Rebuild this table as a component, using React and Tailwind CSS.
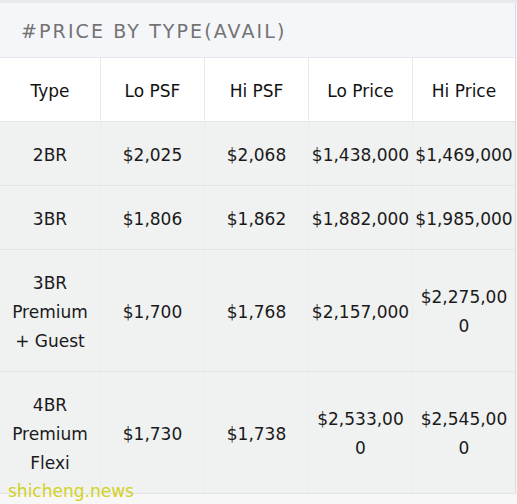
import React from "react";

const cols = ["w-[101px]", "w-[104px]", "w-[104px]", "w-[104px]", "w-[102px]"];

const rows = [
  { h: "h-[64px]", cells: ["2BR", "$2,025", "$2,068", "$1,438,000", "$1,469,000"] },
  { h: "h-[64px]", cells: ["3BR", "$1,806", "$1,862", "$1,882,000", "$1,985,000"] },
  {
    h: "h-[122px]",
    cells: [["3BR", "Premium", "+ Guest"], "$1,700", "$1,768", "$2,157,000", ["$2,275,00", "0"]],
  },
  {
    h: "h-[122px]",
    cells: [["4BR", "Premium", "Flexi"], "$1,730", "$1,738", ["$2,533,00", "0"], ["$2,545,00", "0"]],
  },
];

const Cell = ({ value, width, last, border }) => {
  const lines = Array.isArray(value) ? value : [value];
  return (
    <div
      className={`${width} h-full pt-[3px] flex flex-col items-center justify-center text-center ${
        last ? "" : border
      }`}
    >
      {lines.map((line, i) => (
        <span key={i} className="leading-[29px] whitespace-nowrap">
          {line}
        </span>
      ))}
    </div>
  );
};

const App = () => {
  return (
    <div className="relative w-[517px] h-[504px] bg-[#f7f7f7] overflow-hidden font-['DejaVu_Sans',sans-serif]">
      <div className="h-[3px] bg-[#e9eaee]" />
      <div className="w-[516px] border-r border-[#dcdcdc]">
        <div className="h-[55px] bg-[#f5f6fa] border-b border-[#e6e7ec] flex items-center pl-[21px] pt-[2px]">
          <h2 className="text-[19px] tracking-[2.1px] text-[#737373]">#PRICE BY TYPE(AVAIL)</h2>
        </div>

        <div className="flex h-[64px] bg-white border-b border-[#e6e6e6] text-[17px] text-[#111]">
          {["Type", "Lo PSF", "Hi PSF", "Lo Price", "Hi Price"].map((t, i) => (
            <Cell key={t} value={t} width={cols[i]} last={i === 4} border="border-r border-[#e8e8e8]" />
          ))}
        </div>

        {rows.map((row, r) => (
          <div
            key={r}
            className={`flex ${row.h} bg-[#f0f1f1] border-b border-[#e2e3e3] text-[17px] text-[#1a1a1a]`}
          >
            {row.cells.map((c, i) => (
              <Cell key={i} value={c} width={cols[i]} last={i === 4} border="border-r border-[#ebecec]" />
            ))}
          </div>
        ))}
      </div>

      <span className="absolute left-[8px] top-[479px] text-[17px] text-[#d2d21e] font-['DejaVu_Sans',sans-serif]">
        shicheng.news
      </span>
    </div>
  );
};

export default App;
